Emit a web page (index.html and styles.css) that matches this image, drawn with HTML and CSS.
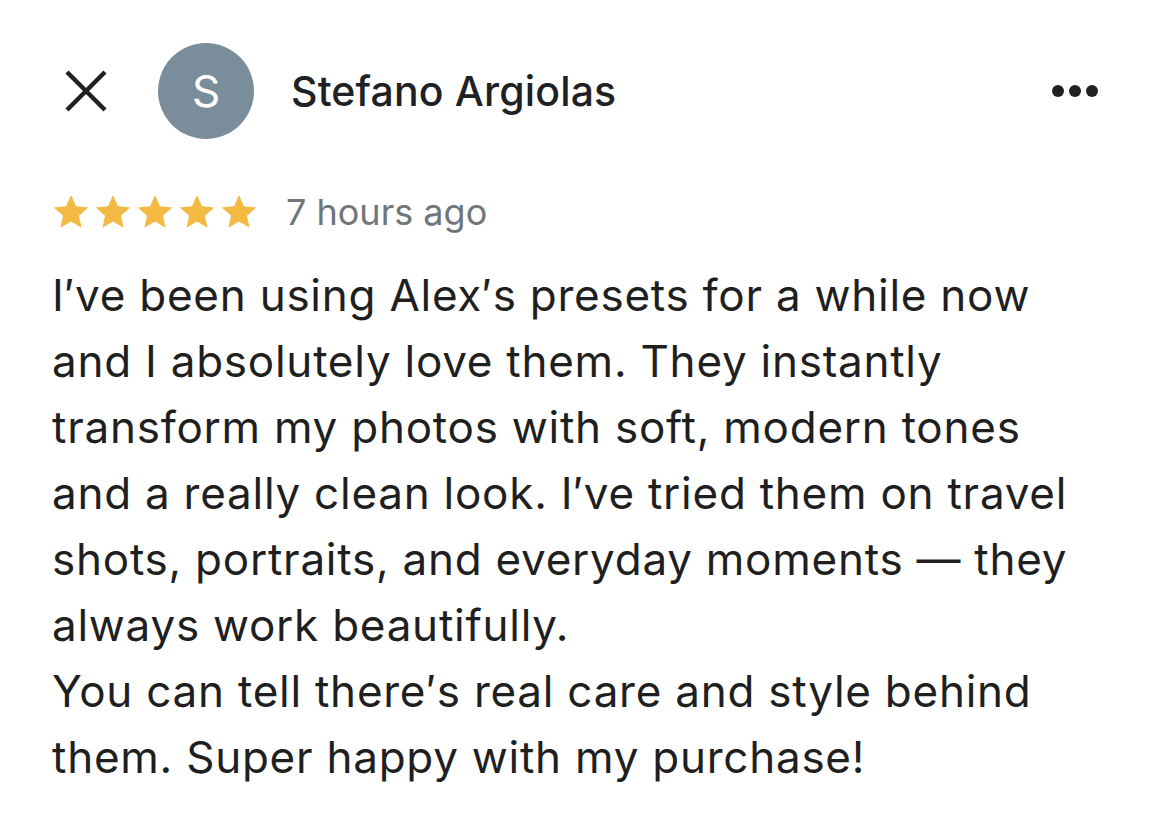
FILE: index.html
```html
<!DOCTYPE html>
<html>
<head>
<meta charset="utf-8">
<link rel="stylesheet" href="styles.css">
</head>
<body>
<div class="review">
  <header class="top">
    <button class="close" aria-label="Close">
      <svg width="44" height="44" viewBox="0 0 44 44"><path d="M3 3 L41 41 M41 3 L3 41" stroke="#202124" stroke-width="4.5" stroke-linecap="butt" fill="none"/></svg>
    </button>
    <div class="avatar">S</div>
    <div class="name">Stefano Argiolas</div>
    <div class="more">
      <span class="dot"></span><span class="dot"></span><span class="dot"></span>
    </div>
  </header>
  <div class="meta">
    <div class="stars">
      <svg class="star" viewBox="0 0 24 24"><path d="M12 1.2 L15.1 8.4 L22.9 9.1 L17 14.3 L18.7 22 L12 18 L5.3 22 L7 14.3 L1.1 9.1 L8.9 8.4 Z"/></svg>
      <svg class="star" viewBox="0 0 24 24"><path d="M12 1.2 L15.1 8.4 L22.9 9.1 L17 14.3 L18.7 22 L12 18 L5.3 22 L7 14.3 L1.1 9.1 L8.9 8.4 Z"/></svg>
      <svg class="star" viewBox="0 0 24 24"><path d="M12 1.2 L15.1 8.4 L22.9 9.1 L17 14.3 L18.7 22 L12 18 L5.3 22 L7 14.3 L1.1 9.1 L8.9 8.4 Z"/></svg>
      <svg class="star" viewBox="0 0 24 24"><path d="M12 1.2 L15.1 8.4 L22.9 9.1 L17 14.3 L18.7 22 L12 18 L5.3 22 L7 14.3 L1.1 9.1 L8.9 8.4 Z"/></svg>
      <svg class="star" viewBox="0 0 24 24"><path d="M12 1.2 L15.1 8.4 L22.9 9.1 L17 14.3 L18.7 22 L12 18 L5.3 22 L7 14.3 L1.1 9.1 L8.9 8.4 Z"/></svg>
    </div>
    <span class="time">7 hours ago</span>
  </div>
  <p class="body">I′ve been using Alex′s presets for a while now<br>and I absolutely love them. They instantly<br>transform my photos with soft, modern tones<br>and a really clean look. I′ve tried them on travel<br>shots, portraits, and everyday moments — they<br>always work beautifully.<br>You can tell there′s real care and style behind<br>them. Super happy with my purchase!</p>
</div>
</body>
</html>
```

FILE: styles.css
```css
html, body {
  margin: 0;
  padding: 0;
  background: #ffffff;
}
body {
  font-family: Inter, Roboto, "Noto Sans", sans-serif;
  color: #202124;
  width: 1156px;
  height: 833px;
  overflow: hidden;
}
.review {
  padding: 43px 0 0 0;
}
.top {
  display: flex;
  align-items: center;
  height: 96px;
}
.close {
  border: none;
  background: none;
  padding: 0;
  margin: 0 0 0 64px;
  width: 44px;
  height: 44px;
  display: flex;
}
.avatar {
  margin-left: 50px;
  width: 96px;
  height: 96px;
  border-radius: 50%;
  background: #7a8d9b;
  color: #ffffff;
  font-size: 44px;
  display: flex;
  align-items: center;
  justify-content: center;
  line-height: 1;
}
.name {
  margin-left: 37px;
  font-size: 41px;
  font-weight: 500;
  letter-spacing: 0.15px;
  flex: 1;
}
.more {
  display: flex;
  gap: 5px;
  margin-right: 58px;
}
.dot {
  width: 12px;
  height: 12px;
  border-radius: 50%;
  background: #202124;
}
.meta {
  display: flex;
  align-items: center;
  margin: 53px 0 0 52px;
  height: 40px;
}
.stars {
  display: flex;
  gap: 4px;
}
.star {
  width: 38px;
  height: 38px;
  fill: #f4b942;
}
.time {
  margin-left: 28px;
  font-size: 36px;
  color: #70757a;
}
.body {
  margin: 30px 0 0 52px;
  font-size: 44px;
  line-height: 66px;
  letter-spacing: 0.75px;
  color: #1f1f1f;
}
```
